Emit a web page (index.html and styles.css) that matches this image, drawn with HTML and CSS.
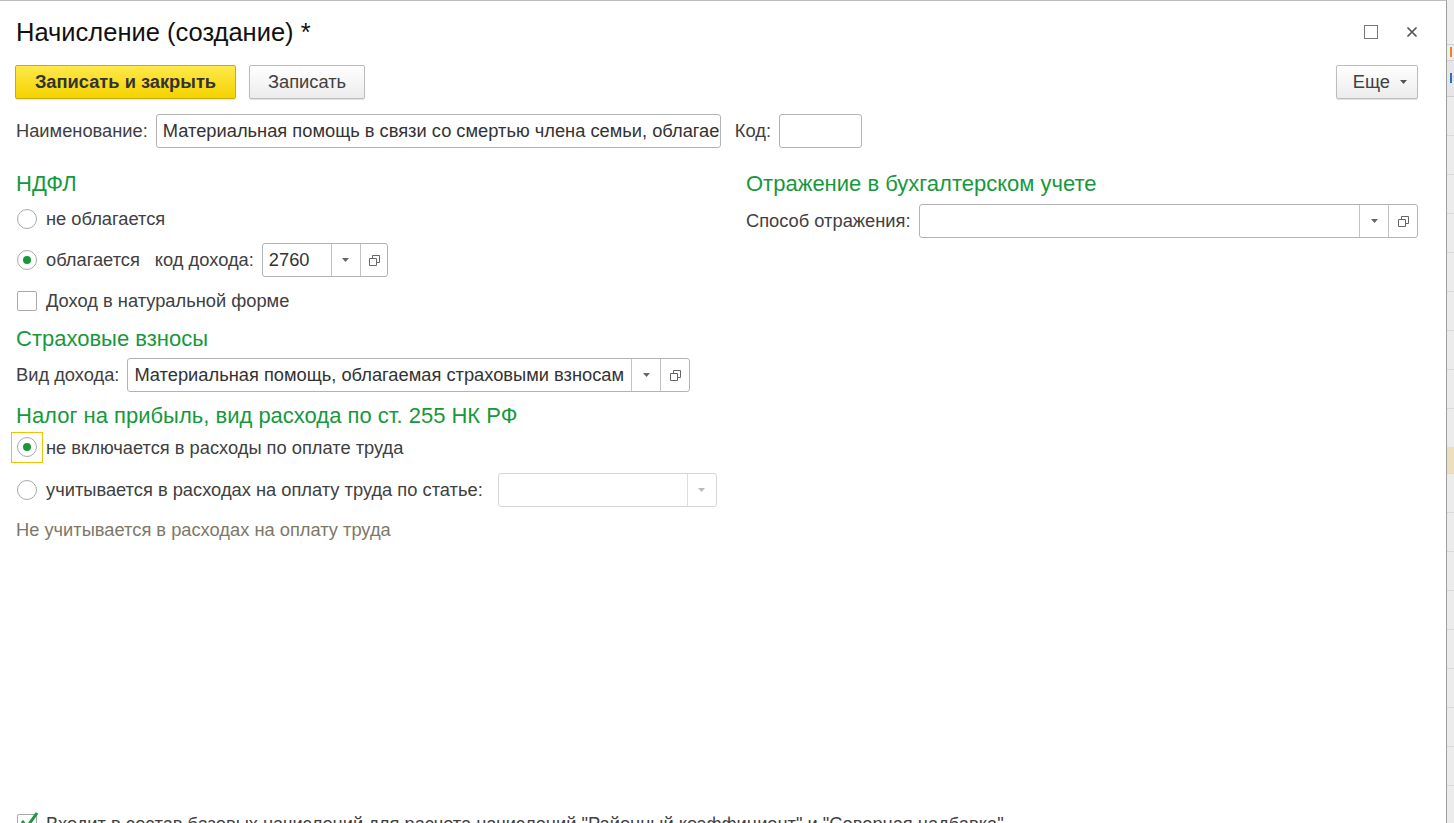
FILE: index.html
```html
<!DOCTYPE html>
<html lang="ru">
<head>
    <meta charset="UTF-8">
    <title>Начисление (создание)</title>
    <link rel="stylesheet" href="styles.css">
</head>
<body>
<div class="screen">
    <div class="window">
        <div class="title-row">
            <h1 class="title">Начисление (создание) *</h1>
            <div class="win-controls">
                <span class="win-max"></span>
                <svg class="win-close" width="12" height="12" viewBox="0 0 12 12">
                    <path d="M1.5 1.5 L10.5 10.5 M10.5 1.5 L1.5 10.5" stroke="#555" stroke-width="1.7" fill="none"/>
                </svg>
            </div>
        </div>

        <div class="toolbar">
            <button class="btn btn-primary">Записать и закрыть</button>
            <button class="btn btn-save">Записать</button>
            <button class="btn btn-more">Еще
                <svg class="arrow" width="7" height="4" viewBox="0 0 7 4"><path d="M0 0 H7 L3.5 4 Z" fill="#555"/></svg>
            </button>
        </div>

        <div class="name-row">
            <span class="field-label">Наименование:</span>
            <div class="input input-name">Материальная помощь в связи со смертью члена семьи, облагае</div>
            <span class="field-label code-label">Код:</span>
            <div class="input input-code"></div>
        </div>

        <div class="columns">
            <div class="col-left">
                <h2 class="group-title">НДФЛ</h2>

                <div class="row row-ndfl-1">
                    <span class="radio"></span>
                    <span class="opt-label">не облагается</span>
                </div>

                <div class="row row-ndfl-2">
                    <span class="radio checked"></span>
                    <span class="opt-label">облагается</span>
                    <span class="sub-label">код дохода:</span>
                    <div class="input combo combo-code">
                        <span class="combo-text">2760</span>
                        <span class="combo-btn"><svg width="7" height="4" viewBox="0 0 7 4"><path d="M0 0 H7 L3.5 4 Z" fill="#666"/></svg></span>
                        <span class="combo-btn"><svg width="13" height="13" viewBox="0 0 13 13"><path d="M4.5 1.5 H11.5 V8.5 H4.5 Z" fill="none" stroke="#666"/><path d="M1.5 4.5 H8.5 V11.5 H1.5 Z" fill="#fff" stroke="#666"/></svg></span>
                    </div>
                </div>

                <div class="row row-natural">
                    <span class="checkbox"></span>
                    <span class="opt-label">Доход в натуральной форме</span>
                </div>

                <h2 class="group-title title-insurance">Страховые взносы</h2>

                <div class="row row-income">
                    <span class="field-label">Вид дохода:</span>
                    <div class="input combo combo-income">
                        <span class="combo-text">Материальная помощь, облагаемая страховыми взносам</span>
                        <span class="combo-btn"><svg width="7" height="4" viewBox="0 0 7 4"><path d="M0 0 H7 L3.5 4 Z" fill="#666"/></svg></span>
                        <span class="combo-btn"><svg width="13" height="13" viewBox="0 0 13 13"><path d="M4.5 1.5 H11.5 V8.5 H4.5 Z" fill="none" stroke="#666"/><path d="M1.5 4.5 H8.5 V11.5 H1.5 Z" fill="#fff" stroke="#666"/></svg></span>
                    </div>
                </div>

                <h2 class="group-title title-tax">Налог на прибыль, вид расхода по ст. 255 НК РФ</h2>

                <div class="row row-tax-1">
                    <span class="focus-frame"><span class="radio checked"></span></span>
                    <span class="opt-label tight">не включается в расходы по оплате труда</span>
                </div>

                <div class="row row-tax-2">
                    <span class="radio"></span>
                    <span class="opt-label">учитывается в расходах на оплату труда по статье:</span>
                    <div class="input combo combo-article">
                        <span class="combo-text"></span>
                        <span class="combo-btn"><svg width="7" height="4" viewBox="0 0 7 4"><path d="M0 0 H7 L3.5 4 Z" fill="#bbb"/></svg></span>
                    </div>
                </div>

                <div class="note">Не учитывается в расходах на оплату труда</div>
            </div>

            <div class="col-right">
                <h2 class="group-title">Отражение в бухгалтерском учете</h2>
                <div class="row row-method">
                    <span class="field-label">Способ отражения:</span>
                    <div class="input combo combo-method">
                        <span class="combo-text"></span>
                        <span class="combo-btn"><svg width="7" height="4" viewBox="0 0 7 4"><path d="M0 0 H7 L3.5 4 Z" fill="#666"/></svg></span>
                        <span class="combo-btn"><svg width="13" height="13" viewBox="0 0 13 13"><path d="M4.5 1.5 H11.5 V8.5 H4.5 Z" fill="none" stroke="#666"/><path d="M1.5 4.5 H8.5 V11.5 H1.5 Z" fill="#fff" stroke="#666"/></svg></span>
                    </div>
                </div>
            </div>
        </div>

        <div class="row row-base">
            <span class="checkbox checked">
                <svg width="22" height="22" viewBox="0 0 22 22"><path d="M4 11 L9 17 L19 3" stroke="#1a9a3e" stroke-width="3" fill="none"/></svg>
            </span>
            <span class="opt-label">Входит в состав базовых начислений для расчета начислений "Районный коэффициент" и "Северная надбавка"</span>
        </div>
    </div>

    <div class="backdrop">
        <div class="bd-head"></div>
        <div class="bd-band"><span class="bd-tick"></span></div>
        <div class="bd-band bd-band-tall"><span class="bd-tick blue"></span></div>
        <div class="bd-rows"></div>
        <div class="bd-row-hl"></div>
        <div class="bd-rows"></div>
    </div>
</div>
</body>
</html>
```

FILE: styles.css
```css
body {
    margin: 0;
    font-family: "Liberation Sans", Arial, sans-serif;
    font-size: 18.3px;
    color: #404040;
    background: #fff;
}
.screen {
    display: flex;
    height: 823px;
    overflow: hidden;
}
.window {
    width: 1447px;
    flex: none;
    box-sizing: border-box;
    border-top: 1px solid #bcbcbc;
    border-right: 1px solid #9e9e9e;
    padding: 0 28px 0 16px;
    display: flex;
    flex-direction: column;
    overflow: hidden;
}

/* title */
.title-row {
    display: flex;
    align-items: center;
    justify-content: space-between;
    padding-top: 16px;
    height: 30px;
}
.title {
    margin: 0;
    font-size: 25.5px;
    font-weight: normal;
    line-height: 30px;
    color: #111;
}
.win-controls {
    display: flex;
    align-items: center;
    gap: 28px;
}
.win-max {
    width: 12px;
    height: 12px;
    border: 1.5px solid #777;
}

/* toolbar */
.toolbar {
    display: flex;
    gap: 13px;
    margin-top: 18px;
    height: 34px;
}
.btn {
    font-family: inherit;
    font-size: 18.3px;
    color: #404040;
    height: 34px;
    border: 1px solid #bcbcbc;
    border-radius: 2px;
    background: linear-gradient(#ffffff, #ececec);
    box-shadow: 0 1px 1px rgba(0, 0, 0, 0.12);
    padding: 0;
}
.btn-primary {
    width: 221px;
    margin-left: -1px;
    font-weight: bold;
    color: #333;
    border-color: #c9ad0a;
    background: linear-gradient(#ffe84a, #f4d300);
}
.btn-save {
    width: 116px;
}
.btn-more {
    width: 82px;
    margin-left: auto;
    display: flex;
    align-items: center;
    justify-content: flex-end;
    gap: 10px;
    padding-right: 10px;
}

/* common fields */
.row {
    display: flex;
    align-items: center;
}
.field-label {
    white-space: nowrap;
    margin-right: 8px;
}
.input {
    box-sizing: border-box;
    height: 34px;
    border: 1px solid #b3b3b3;
    border-radius: 3px;
    background: #fff;
    color: #333;
}
.combo {
    display: flex;
    align-items: stretch;
}
.combo-text {
    flex: 1;
    min-width: 0;
    padding: 0 6px;
    line-height: 32px;
    white-space: nowrap;
    overflow: hidden;
}
.combo-btn {
    flex: none;
    width: 28px;
    border-left: 1px solid #c4c4c4;
    display: flex;
    align-items: center;
    justify-content: center;
}

.name-row {
    display: flex;
    align-items: center;
    margin-top: 15px;
    height: 34px;
}
.input-name {
    width: 565px;
    padding: 0 6px;
    line-height: 32px;
    white-space: nowrap;
    overflow: hidden;
}
.code-label {
    margin-left: 14px;
}
.input-code {
    width: 83px;
}

/* columns */
.columns {
    display: grid;
    grid-template-columns: 704px 1fr;
    column-gap: 26px;
    margin-top: 24px;
}
.group-title {
    margin: 0;
    font-size: 22px;
    font-weight: normal;
    line-height: 24px;
    height: 24px;
    color: #17983c;
    white-space: nowrap;
}

.radio {
    flex: none;
    box-sizing: border-box;
    width: 20px;
    height: 20px;
    margin-left: 1px;
    border: 1px solid #a9a9a9;
    border-radius: 50%;
    background: #fff;
    display: flex;
    align-items: center;
    justify-content: center;
}
.radio.checked::after {
    content: "";
    width: 8px;
    height: 8px;
    border-radius: 50%;
    background: #17983c;
}
.checkbox {
    flex: none;
    box-sizing: border-box;
    width: 20px;
    height: 20px;
    margin-left: 1px;
    border: 1px solid #a9a9a9;
    border-radius: 2px;
    background: #fff;
    position: relative;
}
.checkbox svg {
    position: absolute;
    left: 0;
    top: -5px;
}
.opt-label {
    margin-left: 9px;
    white-space: nowrap;
}
.opt-label.tight {
    margin-left: 3px;
}
.sub-label {
    margin-left: 15px;
    margin-right: 8px;
}

.row-ndfl-1 {
    height: 30px;
    margin-top: 8px;
}
.row-ndfl-2 {
    height: 34px;
    margin-top: 9px;
}
.combo-code {
    width: 126px;
}
.combo-code .combo-text {
    flex: none;
    width: 56px;
}
.row-natural {
    height: 30px;
    margin-top: 9px;
}
.title-insurance {
    margin-top: 11px;
}
.row-income {
    height: 34px;
    margin-top: 7px;
}
.combo-income {
    width: 563px;
}
.title-tax {
    margin-top: 12px;
}
.row-tax-1 {
    height: 31px;
    margin-top: 4px;
}
.focus-frame {
    display: flex;
    margin-left: -5px;
    padding: 4px 5px 5px;
    border: 1px solid #f2c200;
}
.focus-frame .radio {
    margin-left: 0;
}
.row-tax-2 {
    height: 34px;
    margin-top: 10px;
}
.combo-article {
    width: 219px;
    margin-left: 15px;
    border-color: #d6d6d6;
}
.combo-article .combo-btn {
    border-left-color: #dedede;
}
.note {
    margin-top: 13px;
    line-height: 20px;
    color: #7d7868;
}

.row-method {
    height: 34px;
    margin-top: 8px;
}
.combo-method {
    flex: 1;
}

.row-base {
    margin-top: auto;
    margin-bottom: -16px;
    height: 30px;
}

/* application behind the dialog */
.backdrop {
    flex: 1;
    background: #eeeeee;
    display: flex;
    flex-direction: column;
}
.bd-head {
    height: 64px;
    border-bottom: 1px solid #cfcfcf;
}
.bd-band {
    height: 22px;
    border-bottom: 1px solid #cfcfcf;
    display: flex;
    align-items: center;
}
.bd-band-tall {
    height: 52px;
    background: #e6e6e6;
}
.bd-tick {
    width: 2px;
    height: 10px;
    margin-left: 3px;
    background: #e08a1e;
}
.bd-tick.blue {
    background: #2f6fc0;
}
.bd-rows {
    height: 512px;
    background: repeating-linear-gradient(#ececec 0, #ececec 38px, #d9d9d9 38px, #d9d9d9 39px);
}
.bd-row-hl {
    height: 38px;
    background: #ebdfbf;
    border-bottom: 1px solid #d9d9d9;
}
```
